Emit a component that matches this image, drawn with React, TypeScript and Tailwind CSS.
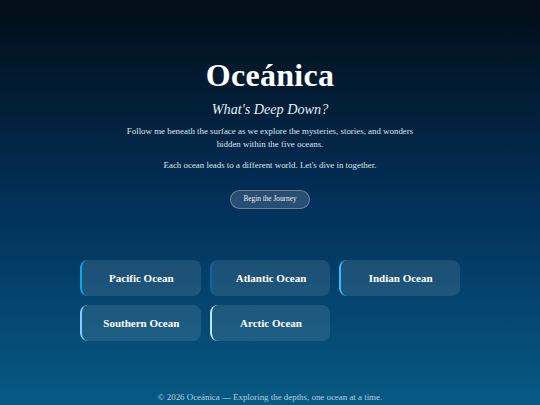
const oceans = [
  { name: "Pacific Ocean", edge: "border-l-[#0ea5e9]" },
  { name: "Atlantic Ocean", edge: "border-l-[#0369a1]" },
  { name: "Indian Ocean", edge: "border-l-[#38bdf8]" },
  { name: "Southern Ocean", edge: "border-l-[#7dd3fc]" },
  { name: "Arctic Ocean", edge: "border-l-[#bae6fd]" },
];

export default function App() {
  return (
    <div
      className="flex min-h-screen flex-col items-center bg-gradient-to-b from-[#020d17] via-[#03305a] to-[#075a84] text-white"
      style={{ fontFamily: '"Liberation Serif", "DejaVu Serif", serif' }}
    >
      <header className="flex flex-col items-center pt-[57px] text-center">
        <h1 className="text-[32px] font-bold leading-[36px] tracking-[0.3px]">Oceánica</h1>
        <h2 className="mt-[6px] text-[14.2px] italic leading-[20px] text-[#e2eef7]">
          What's Deep Down?
        </h2>
        <p className="mt-[6px] text-[8.9px] leading-[13px] text-[#d9e5ef]">
          Follow me beneath the surface as we explore the mysteries, stories, and wonders
          <br />
          hidden within the five oceans.
        </p>
        <p className="mt-[8px] text-[8.9px] leading-[13px] text-[#d9e5ef]">
          Each ocean leads to a different world. Let's dive in together.
        </p>
        <button className="mt-[18px] h-[19px] rounded-full border border-white/30 bg-white/15 px-[12px] text-[7.3px] text-[#e6eef5]">
          Begin the Journey
        </button>
      </header>

      <div className="mt-[51px] grid w-[380px] grid-cols-3 gap-[9px]">
        {oceans.map((o) => (
          <div
            key={o.name}
            className={`flex h-[36px] items-center justify-center rounded-[8px] border-l-2 bg-white/10 text-[11px] font-bold ${o.edge}`}
          >
            {o.name}
          </div>
        ))}
      </div>

      <footer className="mt-[50px] text-[8.9px] leading-[12px] text-[#b9cfdf]">
        © 2026 Oceánica — Exploring the depths, one ocean at a time.
      </footer>
    </div>
  );
}
